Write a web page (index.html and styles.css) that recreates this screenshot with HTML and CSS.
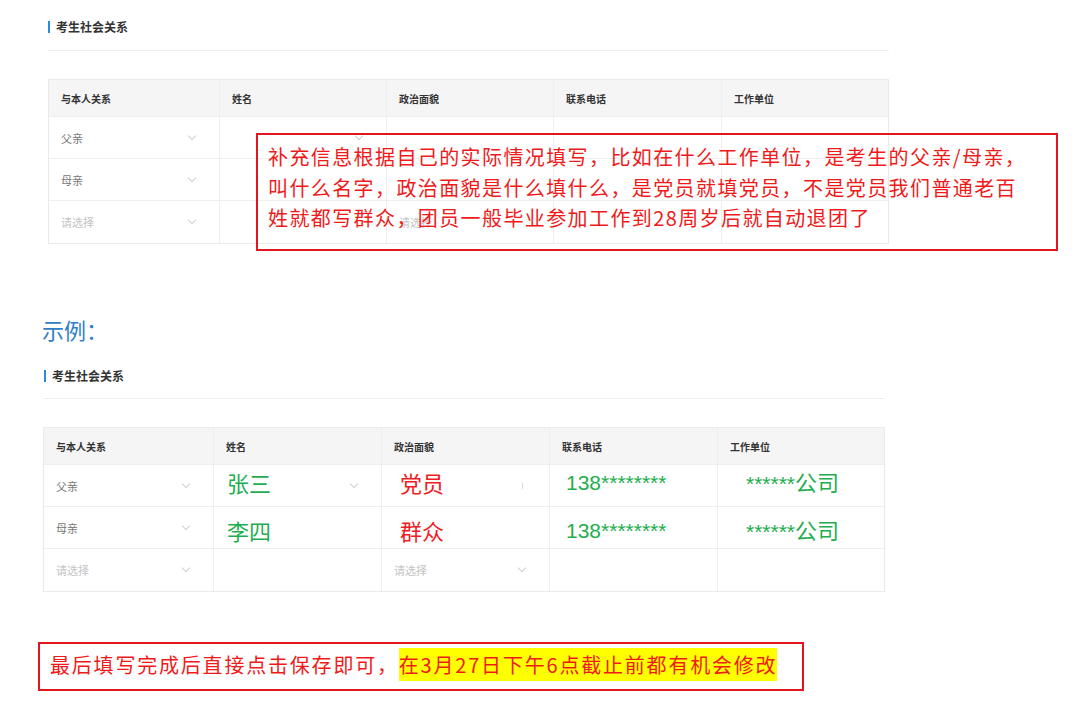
FILE: index.html
```html
<!DOCTYPE html>
<html lang="zh-CN">
<head>
<meta charset="utf-8">
<title>考生社会关系</title>
<link rel="stylesheet" href="styles.css">
</head>
<body>
<div class="page">
  <section class="block block-top">
    <div class="title"><span class="bar"></span>考生社会关系</div>
    <div class="divider"></div>
    <div class="grid grid-a">
      <div class="cell head">与本人关系</div>
      <div class="cell head">姓名</div>
      <div class="cell head">政治面貌</div>
      <div class="cell head">联系电话</div>
      <div class="cell head">工作单位</div>

      <div class="cell"><span class="val">父亲</span><span class="chev"></span></div>
      <div class="cell"><span class="chev"></span></div>
      <div class="cell"></div>
      <div class="cell"></div>
      <div class="cell"></div>

      <div class="cell"><span class="val">母亲</span><span class="chev"></span></div>
      <div class="cell"></div>
      <div class="cell"></div>
      <div class="cell"></div>
      <div class="cell"></div>

      <div class="cell"><span class="ph">请选择</span><span class="chev"></span></div>
      <div class="cell"></div>
      <div class="cell"><span class="ph">请选择</span></div>
      <div class="cell"></div>
      <div class="cell"></div>
    </div>
    <div class="note note-top">补充信息根据自己的实际情况填写，比如在什么工作单位，是考生的父亲/母亲，<br>叫什么名字，政治面貌是什么填什么，是党员就填党员，不是党员我们普通老百<br>姓就都写群众，团员一般毕业参加工作到28周岁后就自动退团了</div>
  </section>

  <div class="example">示例：</div>

  <section class="block block-bottom">
    <div class="title"><span class="bar"></span>考生社会关系</div>
    <div class="divider"></div>
    <div class="grid grid-b">
      <div class="cell head">与本人关系</div>
      <div class="cell head">姓名</div>
      <div class="cell head">政治面貌</div>
      <div class="cell head">联系电话</div>
      <div class="cell head">工作单位</div>

      <div class="cell"><span class="val">父亲</span><span class="chev"></span></div>
      <div class="cell fill high"><span class="big green">张三</span><span class="chev"></span></div>
      <div class="cell fill high pad-red"><span class="big red">党员</span><span class="tick"></span></div>
      <div class="cell fill high pad-phone"><span class="num green">138********</span></div>
      <div class="cell fill high pad-co"><span class="num green">******<span class="cjk">公司</span></span></div>

      <div class="cell"><span class="val">母亲</span><span class="chev"></span></div>
      <div class="cell fill low"><span class="big green">李四</span></div>
      <div class="cell fill low pad-red"><span class="big red">群众</span></div>
      <div class="cell fill low pad-phone"><span class="num green">138********</span></div>
      <div class="cell fill low pad-co"><span class="num green">******<span class="cjk">公司</span></span></div>

      <div class="cell"><span class="ph">请选择</span><span class="chev"></span></div>
      <div class="cell"></div>
      <div class="cell"><span class="ph">请选择</span><span class="chev"></span></div>
      <div class="cell"></div>
      <div class="cell"></div>
    </div>
  </section>

  <div class="note note-bottom">最后填写完成后直接点击保存即可，<mark class="hl">在3月27日下午6点截止前都有机会修改</mark></div>
</div>
</body>
</html>
```

FILE: styles.css
```css
* { box-sizing: border-box; }
html, body { margin: 0; padding: 0; background: #ffffff; }
body {
  font-family: "Noto Sans CJK SC", "Noto Sans", "Liberation Sans", sans-serif;
  color: #333;
}
.page {
  width: 1080px;
  height: 707px;
  overflow: hidden;
  position: relative;
  padding-top: 19px;
}
.block { position: relative; }
.block-top { margin-left: 48px; width: 841px; }
.block-bottom { margin-left: 43px; width: 842px; margin-top: 24px; }

.title {
  display: flex;
  align-items: center;
  height: 16px;
  font-size: 12px;
  font-weight: 700;
  color: #333;
  line-height: 16px;
}
.bar {
  width: 2px;
  height: 12px;
  background: #2b8ae0;
  margin-right: 6px;
}
.block-bottom .bar { margin-right: 6px; margin-left: 1px; }
.divider {
  height: 1px;
  background: #efefef;
  margin-top: 15px;
}
.block-bottom .divider { margin-top: 14px; }

.grid {
  display: grid;
  grid-template-rows: 37px 42px 42px 42px;
  border: 1px solid #eaeaea;
  margin-top: 28px;
}
.grid-a { grid-template-columns: 171px 167px 167px 168px 166px; }
.grid-b { grid-template-columns: 170px 168px 168px 168px 166px; }

.cell {
  position: relative;
  display: flex;
  align-items: center;
  padding-left: 12px;
  border-right: 1px solid #efefef;
  border-bottom: 1px solid #efefef;
  font-size: 11px;
  color: #666;
}
.cell:nth-child(5n) { border-right: none; }
.grid > .cell:nth-last-child(-n+5) { border-bottom: none; }
.head {
  background: #f5f5f6;
  font-size: 10px;
  font-weight: 700;
  color: #333;
}
.val { color: #777; }
.ph { color: #c4c4c4; }
.chev {
  position: absolute;
  right: 24px;
  top: 50%;
  width: 6px;
  height: 6px;
  margin-top: -5px;
  border-right: 1px solid #cfcfcf;
  border-bottom: 1px solid #cfcfcf;
  transform: rotate(45deg);
}
.tick {
  position: absolute;
  right: 26px;
  top: 50%;
  width: 1px;
  height: 6px;
  margin-top: -3px;
  background: #dcdcdc;
}

.fill { padding-left: 13px; }
.pad-red { padding-left: 18px; }
.pad-phone { padding-left: 16px; }
.pad-co { padding-left: 28px; }
.high { padding-bottom: 7px; }
.low { padding-top: 5px; }
.big { font-size: 22px; line-height: 1; }
.num {
  font-family: "Liberation Sans", Arial, sans-serif;
  font-size: 21px;
  line-height: 1;
}
.num .cjk {
  font-family: "Noto Sans CJK SC", sans-serif;
  font-size: 22px;
}
.green { color: #1fae4f; }
.red { color: #ee1c24; }

.note {
  border: 2px solid #e3141d;
  color: #ef1a1a;
  font-size: 20px;
  letter-spacing: 1.4px;
}
.note-top {
  position: absolute;
  left: 208px;
  top: 114px;
  width: 802px;
  height: 118px;
  padding: 7px 10px 0 10px;
  line-height: 30.5px;
  background: transparent;
  white-space: nowrap;
}

.example {
  margin-top: 70px;
  margin-left: 42px;
  font-size: 22px;
  line-height: 30px;
  color: #2f80c6;
}

.note-bottom {
  margin-top: 50px;
  margin-left: 38px;
  width: 766px;
  height: 49px;
  padding: 6px 0 0 10px;
  line-height: 30px;
  letter-spacing: 1.8px;
  white-space: nowrap;
}
.hl {
  background: #ffff00;
  color: #ef1a1a;
  padding: 2px 0;
}
```
